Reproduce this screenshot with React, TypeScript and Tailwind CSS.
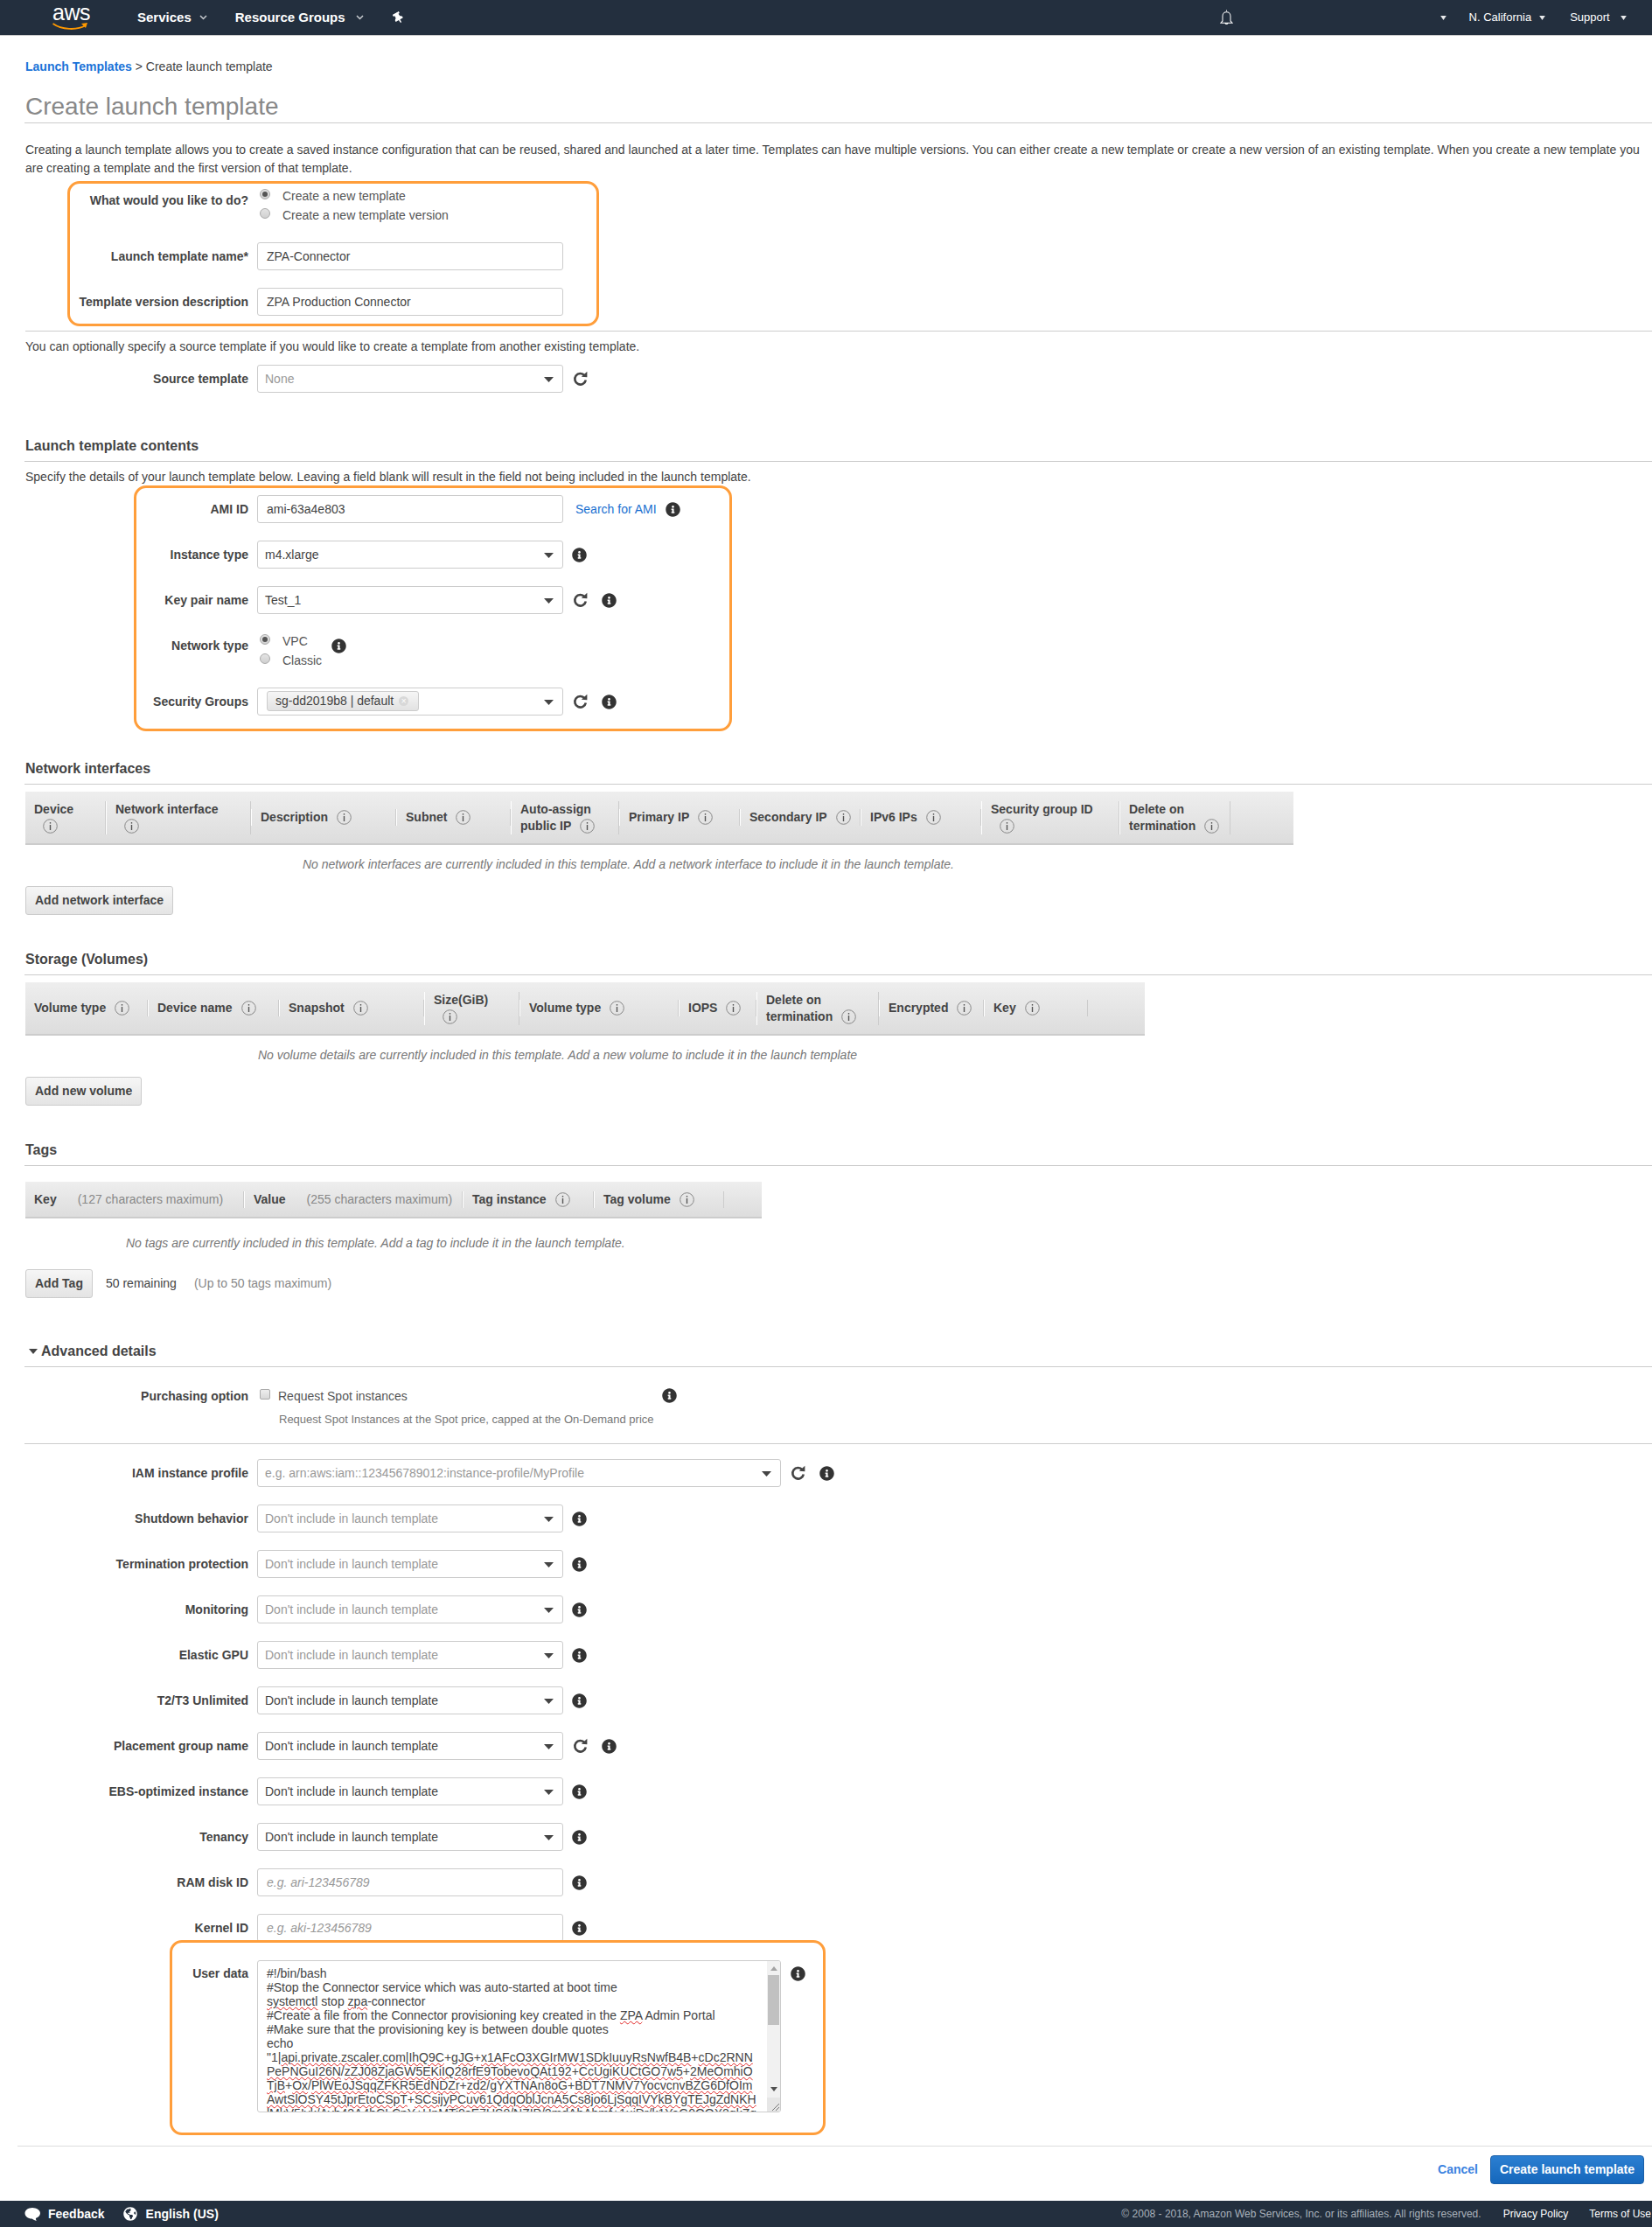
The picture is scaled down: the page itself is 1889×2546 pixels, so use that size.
import React from "react";
import { FaInfoCircle, FaThumbtack, FaGlobeAmericas } from "react-icons/fa";

const Info = ({ className = "" }: { className?: string }) => (
  <FaInfoCircle className={"text-[#333] w-[17px] h-[17px] shrink-0 " + className} />
);
const Refresh = ({ className = "" }: { className?: string }) => (
  <svg viewBox="0 0 17 18" className={"w-[17px] h-[18px] shrink-0 " + className}>
    <path d="M13.4 5.200A6.300 6.300 0 1 0 14.800 10.500" fill="none" stroke="#444" strokeWidth="2.600" />
    <path d="M9.800 6.800L16.400 7.200V0.800z" fill="#444" />
  </svg>
);
const Ic = () => (
  <svg viewBox="0 0 17 17" className="inline-block w-[17px] h-[17px] ml-[10px] align-[-4px]">
    <circle cx="8.5" cy="8.5" r="7.8" fill="none" stroke="#888" strokeWidth="1" />
    <rect x="7.8" y="7" width="1.4" height="6" fill="#555" />
    <rect x="7.8" y="4" width="1.4" height="1.6" fill="#555" />
  </svg>
);
const Arrow = () => (
  <svg viewBox="0 0 11 6" className="w-[11px] h-[6px] absolute right-[10px] top-[13px]">
    <path d="M0 0h11L5.5 6z" fill="#444" />
  </svg>
);
const Chev = () => (
  <svg viewBox="0 0 9 6" className="w-[9px] h-[6px]">
    <path d="M1 1l3.5 3.5L8 1" fill="none" stroke="#c8ccd0" strokeWidth="1.5" />
  </svg>
);
const Tri = () => (
  <svg viewBox="0 0 8 6" className="w-[7px] h-[5px]">
    <path d="M0 0h8L4 6z" fill="#e8eaec" />
  </svg>
);

const Row = ({ label, className = "", children }: { label: string; className?: string; children?: React.ReactNode }) => (
  <div className={"flex items-center h-[32px] ml-[28px] gap-[10px] " + className}>
    <div className="w-[256px] text-right font-bold leading-5">{label}</div>
    {children}
  </div>
);
const Input = ({ value, placeholder }: { value?: string; placeholder?: string }) => (
  <div className={"w-[350px] h-[32px] border border-[#ccc] rounded-[3px] pl-[10px] leading-[30px] bg-white " + (placeholder ? "italic text-[#999]" : "text-[#444]")}>
    {value ?? placeholder}
  </div>
);
const Select = ({ value, muted, className = "w-[350px]" }: { value: React.ReactNode; muted?: boolean; className?: string }) => (
  <div className={"relative h-[32px] border border-[#ccc] rounded-[3px] pl-[8px] leading-[30px] bg-white " + (muted ? "text-[#999] " : "text-[#444] ") + className}>
    {value}
    <Arrow />
  </div>
);
const Radio = ({ on }: { on?: boolean }) => (
  <span className="w-[12px] h-[12px] rounded-full border border-[#aaa] bg-linear-to-b from-[#e4e4e4] to-[#d0d0d0] flex items-center justify-center shrink-0 -mt-[4px]">
    {on && <span className="w-[6px] h-[6px] rounded-full bg-[#555]" />}
  </span>
);
const RadioLine = ({ on, label }: { on?: boolean; label: string }) => (
  <div className="flex items-center h-[22px] ml-[3px] gap-[14px] text-[#555]">
    <Radio on={on} />
    <span>{label}</span>
  </div>
);
const SectionHead = ({ className = "", children }: { className?: string; children: React.ReactNode }) => (
  <div className={"h-[31px] border-b border-[#ccc] ml-[28px] pl-[1px] leading-[26px] text-[16px] font-bold text-[#444] " + className}>{children}</div>
);
const Btn = ({ children, className = "" }: { children: React.ReactNode; className?: string }) => (
  <button className={"h-[33px] px-[10px] border border-[#ccc] rounded-[3px] bg-linear-to-b from-[#f6f6f6] to-[#e4e4e4] font-bold text-[#444] " + className}>{children}</button>
);
const Th = ({ w, tall, first, children }: { w: string; tall?: boolean; first?: boolean; children: React.ReactNode }) => (
  <div className={w + " " + (tall ? "h-[38px]" : "h-[19px]") + " " + (first ? "" : "border-l border-l-white ") + "border-r border-r-[#ccc] pl-[10px] font-bold leading-[19px] whitespace-nowrap shrink-0"}>
    {children}
  </div>
);
const TableHead = ({ className, children }: { className: string; children: React.ReactNode }) => (
  <div className={"flex items-center ml-[29px] border-b-2 border-[#ccc] bg-linear-to-b from-[#eeeeee] to-[#dddddd] " + className}>{children}</div>
);
const Empty = ({ className, children }: { className: string; children: React.ReactNode }) => (
  <div className={"leading-5 italic text-[#777] " + className}>{children}</div>
);
const W = ({ children }: { children: React.ReactNode }) => (
  <span className="underline decoration-wavy decoration-[#e02020] decoration-1 underline-offset-1">{children}</span>
);

const dont = "Don't include in launch template";

export default function App() {
  return (
    <div className="relative w-[1889px] h-[2546px] overflow-hidden bg-white text-[14px] text-[#444] font-['Liberation_Sans',Arial,sans-serif]">
      {/* Top navigation */}
      <header className="h-[41px] bg-[#232f3e] border-b border-[#ccc] flex items-center text-white">
        <div className="ml-[60px] w-[42px] h-[34px] relative shrink-0">
          <span className="absolute left-0 -top-[4px] text-[25px] leading-[30px] tracking-[-0.5px] text-white font-normal">aws</span>
          <svg viewBox="0 0 42 11" className="absolute left-0 top-[22px] w-[42px] h-[11px]">
            <path d="M0.5 2C10 9 28 10 38 4" fill="none" stroke="#f90" strokeWidth="2" />
            <path d="M33 2l7-1-2 6z" fill="#f90" />
          </svg>
        </div>
        <span className="ml-[55px] font-bold text-[15px]">Services</span>
        <span className="ml-[9px]"><Chev /></span>
        <span className="ml-[32px] font-bold text-[15px]">Resource Groups</span>
        <span className="ml-[12px]"><Chev /></span>
        <FaThumbtack className="ml-[33px] w-[13px] h-[13px] -rotate-30 text-white" />
        <svg viewBox="2.5 1 13 16" className="ml-[932px] w-[17px] h-[18px]">
          <path d="M9 1.500v1M5 12.500V7.500a4 4 0 018 0v5l1.800 2H3.200zM7.600 14.800a1.500 1.500 0 002.800 0" fill="none" stroke="#fff" strokeWidth="0.9" />
        </svg>
        <span className="ml-[236px]"><Tri /></span>
        <span className="ml-[26px] text-[13px]">N. California</span>
        <span className="ml-[9px]"><Tri /></span>
        <span className="ml-[28px] text-[13px]">Support</span>
        <span className="ml-[12px]"><Tri /></span>
      </header>

      {/* Breadcrumb */}
      <div className="mt-[25px] ml-[29px] h-[20px] leading-5">
        <span className="text-[#1a73d8] font-bold">Launch Templates</span> &gt; Create launch template
      </div>

      <h1 className="ml-[28px] pl-[1px] pt-[18px] h-[55px] border-b border-[#ccc] text-[28px] leading-[36px] text-[#888] font-normal">Create launch template</h1>

      <p className="mt-[20px] ml-[29px] leading-[21px] whitespace-nowrap">
        Creating a launch template allows you to create a saved instance configuration that can be reused, shared and launched at a later time. Templates can have multiple versions. You can either create a new template or create a new version of an existing template. When you create a new template you
        <br />
        are creating a template and the first version of that template.
      </p>

      {/* What would you like */}
      <div className="mt-[10px] ml-[28px] h-[64px] flex gap-[10px]">
        <div className="w-[256px] text-right font-bold leading-5 mt-[6px]">What would you like to do?</div>
        <div>
          <RadioLine on label="Create a new template" />
          <RadioLine label="Create a new template version" />
        </div>
      </div>
      <Row label="Launch template name*"><Input value="ZPA-Connector" /></Row>
      <Row label="Template version description" className="mt-[20px]"><Input value="ZPA Production Connector" /></Row>

      <div className="mt-[17px] ml-[29px] border-b border-[#ccc]" />
      <div className="mt-[7px] ml-[29px] leading-5">You can optionally specify a source template if you would like to create a template from another existing template.</div>
      <Row label="Source template" className="mt-[11px]">
        <Select value="None" muted />
        <Refresh className="ml-[1px]" />
      </Row>

      {/* Contents */}
      <SectionHead className="mt-[48px]">Launch template contents</SectionHead>
      <div className="mt-[7px] ml-[29px] leading-5">Specify the details of your launch template below. Leaving a field blank will result in the field not being included in the launch template.</div>
      <Row label="AMI ID" className="mt-[11px]">
        <Input value="ami-63a4e803" />
        <span className="ml-[4px] text-[#1a6fd0]">Search for AMI</span>
        <Info />
      </Row>
      <Row label="Instance type" className="mt-[20px]">
        <Select value="m4.xlarge" />
        <Info />
      </Row>
      <Row label="Key pair name" className="mt-[20px]">
        <Select value="Test_1" />
        <Refresh className="ml-[1px]" />
        <Info className="ml-[6px]" />
      </Row>
      <div className="mt-[20px] ml-[28px] h-[64px] flex gap-[10px]">
        <div className="w-[256px] text-right font-bold leading-5 mt-[6px]">Network type</div>
        <div className="w-[85px]">
          <RadioLine on label="VPC" />
          <RadioLine label="Classic" />
        </div>
        <Info className="-ml-[10px] mt-[8px]" />
      </div>
      <Row label="Security Groups">
        <Select
          value={
            <span className="absolute left-[10px] top-[3px] h-[23px] w-[174px] border border-[#ccc] rounded-[3px] bg-linear-to-b from-[#f6f6f6] to-[#e2e2e2] pl-[9px] leading-[21px] text-[#444] flex items-center">
              sg-dd2019b8 | default
              <span className="ml-[6px] w-[11px] h-[11px] rounded-full bg-[#d8d8d8] text-white text-[10px] leading-[11px] text-center">×</span>
            </span>
          }
        />
        <Refresh className="ml-[1px]" />
        <Info className="ml-[6px]" />
      </Row>

      {/* Network interfaces */}
      <SectionHead className="mt-[48px]">Network interfaces</SectionHead>
      <TableHead className="mt-[8px] h-[61px] w-[1450px]">
        <Th w="w-[92px]" tall first>Device<br /><Ic /></Th>
        <Th w="w-[166px]" tall>Network interface<br /><Ic /></Th>
        <Th w="w-[166px]">Description<Ic /></Th>
        <Th w="w-[131px]">Subnet<Ic /></Th>
        <Th w="w-[124px]" tall>Auto-assign<br />public IP<Ic /></Th>
        <Th w="w-[138px]">Primary IP<Ic /></Th>
        <Th w="w-[138px]">Secondary IP<Ic /></Th>
        <Th w="w-[138px]">IPv6 IPs<Ic /></Th>
        <Th w="w-[158px]" tall>Security group ID<br /><Ic /></Th>
        <Th w="w-[127px]" tall>Delete on<br />termination<Ic /></Th>
      </TableHead>
      <Empty className="mt-[12px] ml-[346px]">No network interfaces are currently included in this template. Add a network interface to include it in the launch template.</Empty>
      <Btn className="mt-[15px] ml-[29px] block">Add network interface</Btn>

      {/* Storage */}
      <SectionHead className="mt-[38px]">Storage (Volumes)</SectionHead>
      <TableHead className="mt-[8px] h-[61px] w-[1280px]">
        <Th w="w-[140px]" first>Volume type<Ic /></Th>
        <Th w="w-[150px]">Device name<Ic /></Th>
        <Th w="w-[166px]">Snapshot<Ic /></Th>
        <Th w="w-[109px]" tall>Size(GiB)<br /><Ic /></Th>
        <Th w="w-[182px]">Volume type<Ic /></Th>
        <Th w="w-[89px]">IOPS<Ic /></Th>
        <Th w="w-[140px]" tall>Delete on<br />termination<Ic /></Th>
        <Th w="w-[120px]">Encrypted<Ic /></Th>
        <Th w="w-[119px]">Key<Ic /></Th>
      </TableHead>
      <Empty className="mt-[12px] ml-[295px]">No volume details are currently included in this template. Add a new volume to include it in the launch template</Empty>
      <Btn className="mt-[15px] ml-[29px] block">Add new volume</Btn>

      {/* Tags */}
      <SectionHead className="mt-[38px]">Tags</SectionHead>
      <TableHead className="mt-[18px] h-[42px] w-[842px]">
        <Th w="w-[250px]" first>Key<span className="ml-[24px] font-normal text-[#888]">(127 characters maximum)</span></Th>
        <Th w="w-[250px]">Value<span className="ml-[24px] font-normal text-[#888]">(255 characters maximum)</span></Th>
        <Th w="w-[150px]">Tag instance<Ic /></Th>
        <Th w="w-[149px]">Tag volume<Ic /></Th>
      </TableHead>
      <Empty className="mt-[18px] ml-[144px]">No tags are currently included in this template. Add a tag to include it in the launch template.</Empty>
      <div className="mt-[20px] ml-[29px] flex items-center h-[33px]">
        <Btn>Add Tag</Btn>
        <span className="ml-[15px]">50 remaining</span>
        <span className="ml-[20px] text-[#888]">(Up to 50 tags maximum)</span>
      </div>

      {/* Advanced */}
      <SectionHead className="mt-[48px]">
        <span className="inline-block align-middle mb-[2px] ml-[4px] mr-[4px] w-0 h-0 border-l-[5.5px] border-r-[5.5px] border-t-[6px] border-l-transparent border-r-transparent border-t-[#444]" />
        Advanced details
      </SectionHead>
      <div className="mt-[23px] ml-[28px] h-[65px] border-b border-[#ccc] flex gap-[10px]">
        <div className="w-[256px] text-right font-bold leading-5">Purchasing option</div>
        <div className="flex">
          <div className="w-[350px] pl-[3px]">
            <div className="flex items-center h-[20px] gap-[9px]">
              <span className="w-[12px] h-[12px] rounded-[2px] border border-[#aaa] bg-linear-to-b from-[#eee] to-[#d8d8d8] -mt-[4px]" />
              <span className="text-[#555]">Request Spot instances</span>
            </div>
            <div className="mt-[7px] ml-[22px] text-[13px] leading-5 text-[#777] whitespace-nowrap">Request Spot Instances at the Spot price, capped at the On-Demand price</div>
          </div>
          <Info className="ml-[113px] mt-[1px]" />
        </div>
      </div>
      <Row label="IAM instance profile" className="mt-[17px]">
        <Select value="e.g. arn:aws:iam::123456789012:instance-profile/MyProfile" muted className="w-[599px]" />
        <Refresh className="ml-[1px]" />
        <Info className="ml-[6px]" />
      </Row>
      <Row label="Shutdown behavior" className="mt-[20px]"><Select value={dont} muted /><Info /></Row>
      <Row label="Termination protection" className="mt-[20px]"><Select value={dont} muted /><Info /></Row>
      <Row label="Monitoring" className="mt-[20px]"><Select value={dont} muted /><Info /></Row>
      <Row label="Elastic GPU" className="mt-[20px]"><Select value={dont} muted /><Info /></Row>
      <Row label="T2/T3 Unlimited" className="mt-[20px]"><Select value={dont} /><Info /></Row>
      <Row label="Placement group name" className="mt-[20px]">
        <Select value={dont} />
        <Refresh className="ml-[1px]" />
        <Info className="ml-[6px]" />
      </Row>
      <Row label="EBS-optimized instance" className="mt-[20px]"><Select value={dont} /><Info /></Row>
      <Row label="Tenancy" className="mt-[20px]"><Select value={dont} /><Info /></Row>
      <Row label="RAM disk ID" className="mt-[20px]"><Input placeholder="e.g. ari-123456789" /><Info /></Row>
      <Row label="Kernel ID" className="mt-[20px]"><Input placeholder="e.g. aki-123456789" /><Info /></Row>

      {/* User data */}
      <div className="mt-[21px] ml-[28px] flex gap-[10px] items-start">
        <div className="w-[256px] text-right font-bold leading-5 mt-[5px]">User data</div>
        <div className="relative w-[599px] h-[174px] border border-[#ccc] rounded-[3px] overflow-hidden pl-[10px] pt-[6px] leading-[16px] text-[#444] whitespace-nowrap">
          <div>#!/bin/bash</div>
          <div>#Stop the Connector service which was auto-started at boot time</div>
          <div><W>systemctl</W> stop <W>zpa</W>-connector</div>
          <div>#Create a file from the Connector provisioning key created in the <W>ZPA</W> Admin Portal</div>
          <div>#Make sure that the provisioning key is between double quotes</div>
          <div>echo</div>
          <div>"1|<W>api.private.zscaler.com|IhQ9C</W>+<W>gJG</W>+<W>x1AFcO3XGIrMW1SDkIuuyRsNwfB4B</W>+<W>cDc2RNN</W></div>
          <div><W>PePNGuI26N</W>/<W>zZJ08ZjaGW5EKiIQ28rfE9TobevoQAt192</W>+<W>CcUgiKUCtGO7w5</W>+<W>2MeOmhiO</W></div>
          <div><W>TjB</W>+<W>Ox</W>/<W>PlWEoJSqqZFKR5EdNDZr</W>+<W>zd2</W>/<W>gYXTNAn8oG</W>+<W>BDT7NMV7YocvcnvBZG6DfOIm</W></div>
          <div><W>AwtSlOSY45tJprEtoCSpT</W>+<W>SCsijyPCuv61QdqOblJcnA5Cs8jo6LjSqqIVYkBYgTEJgZdNKH</W></div>
          <div>lMkV5Ivk/Avb42A4bCLCpY+UnMTi0sE7US8/NZIP/2mdAbAbmf+1uiDr/k1YaG0QQX2qkZq</div>
          {/* scrollbar */}
          <div className="absolute right-0 top-0 bottom-0 w-[15px] bg-[#f1f1f1] flex flex-col items-center">
            <svg viewBox="0 0 8 5" className="w-[8px] h-[5px] mt-[6px]"><path d="M4 0l4 5H0z" fill="#a3a3a3" /></svg>
            <div className="w-[13px] h-[58px] mt-[5px] bg-[#c1c1c1]" />
            <svg viewBox="0 0 8 5" className="w-[8px] h-[5px] mt-[71px]"><path d="M0 0h8L4 5z" fill="#505050" /></svg>
            <div className="mt-[7px] h-[16px] w-[15px] bg-[#e6e6e6] relative">
              <svg viewBox="0 0 12 12" className="absolute right-0 bottom-0 w-[12px] h-[12px]">
                <path d="M11 3L3 11M11 7L7 11" stroke="#777" strokeWidth="1" fill="none" />
              </svg>
            </div>
          </div>
        </div>
        <Info className="mt-[7px] ml-[1px]" />
      </div>

      <div className="mt-[38px] ml-[20px] border-b border-[#ddd]" />
      <div className="mt-[10px] flex justify-end items-center pr-[9px] h-[33px]">
        <span className="font-bold text-[#3b82e0] mr-[14px]">Cancel</span>
        <button className="h-[33px] w-[176px] rounded-[4px] border border-[#1a5fa8] bg-linear-to-b from-[#2b7fd1] to-[#1567bc] text-white font-bold">Create launch template</button>
      </div>

      {/* Footer */}
      <footer className="mt-[19px] h-[30px] bg-[#232f3e] flex items-center text-white overflow-hidden">
        <svg viewBox="0 0 18 17" className="ml-[28px] w-[18px] h-[17px] shrink-0">
          <path d="M9 1C4.300 1 .5 3.800.5 7.300c0 3.400 3.600 6.200 8 6.300 1.400 1 3.600 2.200 5.200 2.400-.5-.9-.8-2-.8-3 3-1 5.100-3.200 5.100-5.700C18 3.800 13.700 1 9 1z" fill="#fff" />
        </svg>
        <span className="ml-[9px] font-bold">Feedback</span>
        <FaGlobeAmericas className="ml-[21px] w-[16px] h-[16px] shrink-0" />
        <span className="ml-[10px] font-bold">English (US)</span>
        <span className="ml-auto text-[12px] text-[#aab2bb]">© 2008 - 2018, Amazon Web Services, Inc. or its affiliates. All rights reserved.</span>
        <span className="ml-[25px] text-[12px]">Privacy Policy</span>
        <span className="ml-[24px] mr-[1px] text-[12px]">Terms of Use</span>
      </footer>

      {/* Annotation outlines over the form */}
      <div className="absolute left-[77px] top-[207px] w-[608px] h-[166px] border-[3px] border-[#ff9e3b] rounded-[14px] pointer-events-none" />
      <div className="absolute left-[153px] top-[555px] w-[684px] h-[281px] border-[3px] border-[#ff9e3b] rounded-[14px] pointer-events-none" />
      <div className="absolute left-[194px] top-[2218px] w-[750px] h-[223px] border-[3px] border-[#ff9e3b] rounded-[14px] pointer-events-none" />
    </div>
  );
}
